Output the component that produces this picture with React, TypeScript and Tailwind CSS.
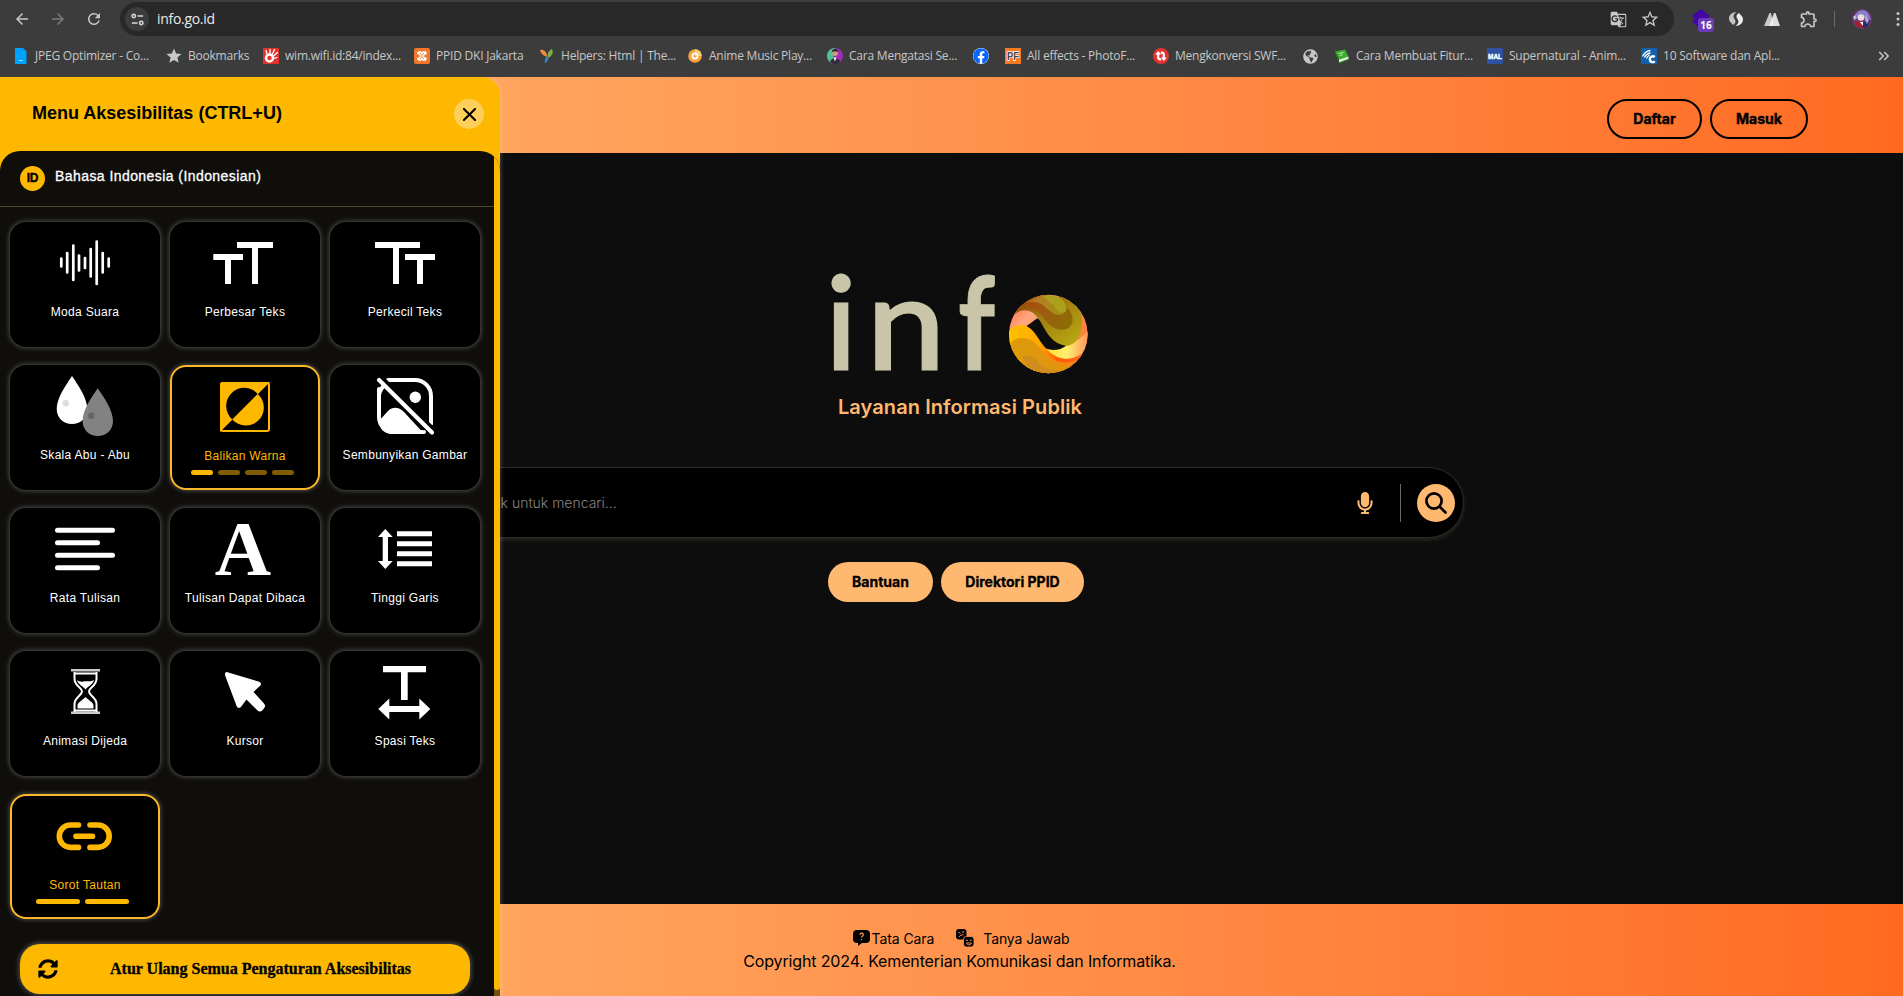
import React from "react";
import {
  MdArrowBack, MdArrowForward, MdRefresh, MdGTranslate, MdStarBorder, MdStar, MdOutlineExtension,
  MdKeyboardDoubleArrowRight,
} from "react-icons/md";
import { FaFacebook, FaSyncAlt, FaGlobeAmericas, FaMicrophone } from "react-icons/fa";

type Bookmark = { icon: React.ReactNode; label?: string; width: string };

const bookmarks: Bookmark[] = [
  {
    width: "w-[153px]", label: "JPEG Optimizer - Co...",
    icon: <svg viewBox="0 0 16 16" className="size-4"><path d="M2 0h8l3.500 3.500V15a1 1 0 0 1-1 1h-9.500a1 1 0 0 1-1-1z" fill="#00a2ff" /><path d="M6 12.500h4" stroke="#9fdcff" /></svg>,
  },
  { width: "w-[97px]", label: "Bookmarks", icon: <MdStar className="size-[18px] -mx-px text-[#c7c7c7]" /> },
  {
    width: "w-[151px]", label: "wim.wifi.id:84/index...",
    icon: <svg viewBox="0 0 16 16" className="size-4"><path d="M0 0h16v16H0z" fill="#e2322d" /><circle cx="6.500" cy="10" r="3.500" fill="none" stroke="#fff" strokeWidth="2.400" /><path d="M4 6 3 2.500M7 5.500V1.500M9.500 6l2-4.500M10.500 8l4-3.500M10.500 10.500l3.500-1" stroke="#fff" strokeWidth="1.300" strokeLinecap="round" /></svg>,
  },
  {
    width: "w-[125px]", label: "PPID DKI Jakarta",
    icon: <svg viewBox="0 0 16 16" className="size-4"><rect width="16" height="16" rx="2" fill="#f0762c" /><path d="M4 4l3 4-3 4M12 4L9 8l3 4M4 4h3l1 2 1-2h3M4 12h3l1-2 1 2h3M4 4v2.500M12 4v2.500M4 12V9.500M12 12V9.500" fill="none" stroke="#fff" strokeWidth="1.400" strokeLinejoin="round" /></svg>,
  },
  {
    width: "w-[148px]", label: "Helpers: Html | The...",
    icon: <svg viewBox="0 0 16 16" className="size-4"><path d="M1 2c4-1 7 2 7 7C5 8 2 6 1 2z" fill="#f08a3c" /><path d="M13 1c2 3 0 7-4 9-1-4 0-7 4-9z" fill="#7db343" /><path d="M8 8c2 2 2 5-2 7-1-2 0-4 2-7z" fill="#2f87d0" /></svg>,
  },
  {
    width: "w-[140px]", label: "Anime Music Play...",
    icon: <svg viewBox="0 0 16 16" className="size-4"><circle cx="8" cy="8" r="6.800" fill="#f5a33a" /><path d="M8 1.200a6.800 6.800 0 0 1 6.800 6.800H8z" fill="#f7d27a" /><circle cx="8" cy="8" r="2.600" fill="none" stroke="#fff" strokeWidth="1.800" /></svg>,
  },
  {
    width: "w-[146px]", label: "Cara Mengatasi Se...",
    icon: <svg viewBox="0 0 16 16" className="size-4"><circle cx="8" cy="8" r="8" fill="#a02cb4" /><path d="M8 0a8 8 0 0 0-3 15.400z" fill="#4fc08f" /><circle cx="8" cy="5" r="3" fill="#c69a7e" /><path d="M5 4c0-4 6-4 6 0-2-1-4-1-6 0z" fill="#222" /><path d="M3 14c1-5 9-5 10 0a8 8 0 0 1-10 0z" fill="#2a2d3a" /><path d="m6.500 9.500 1.500 4 1.500-4z" fill="#fff" /></svg>,
  },
  { width: "w-[32px]", icon: <FaFacebook className="size-4 rounded-full bg-white text-[#0866ff]" /> },
  {
    width: "w-[148px]", label: "All effects - PhotoF...",
    icon: <svg viewBox="0 0 16 16" className="size-4"><path d="M0 0h16v16H0z" fill="#f47a1f" /><text x="2" y="12" fontSize="10.500" fontWeight="900" fontFamily="Liberation Sans, sans-serif" fill="#444" stroke="#fff" strokeWidth="1.600" paintOrder="stroke" textLength="12" lengthAdjust="spacingAndGlyphs">PF</text></svg>,
  },
  {
    width: "w-[150px]", label: "Mengkonversi SWF...",
    icon: <svg viewBox="0 0 16 16" className="size-4"><circle cx="8" cy="8" r="8" fill="#e5322e" /><path d="M5.200 5v4.300a2 2 0 0 0 2 2h1M10.800 11V6.700a2 2 0 0 0-2-2h-1" fill="none" stroke="#fff" strokeWidth="2.200" /><path d="M2.200 6.500l3-3.500 3 3.500zM7.800 9.500l3 3.500 3-3.500z" fill="#fff" /></svg>,
  },
  { width: "w-[31px]", icon: <FaGlobeAmericas className="size-[15px] text-[#c7c7c7]" /> },
  {
    width: "w-[153px]", label: "Cara Membuat Fitur...",
    icon: <svg viewBox="0 0 16 16" className="size-4"><path d="m1 3.500 10-2 3.500 7-9.500 3z" fill="#3fae2e" /><path d="m1 3.500 4 8v3L1 6z" fill="#1f6d18" /><path d="m5 11.500 9.500-3V11L5 14.500z" fill="#d9f0d4" /><path d="M5 14.500 14.500 11v1L5 15.500z" fill="#2b8a20" /><path d="m4.500 5.500 5-1M5.500 7.500l3-.7" stroke="#b9f0a8" /></svg>,
  },
  {
    width: "w-[154px]", label: "Supernatural - Anim...",
    icon: <svg viewBox="0 0 16 16" className="size-4"><rect width="16" height="16" rx="1" fill="#2e51a2" /><text x="1" y="11" fontSize="7.500" fontWeight="900" fontFamily="Liberation Sans, sans-serif" fill="#fff" stroke="#fff" strokeWidth=".4" textLength="14" lengthAdjust="spacingAndGlyphs">MAL</text></svg>,
  },
  {
    width: "w-[150px]", label: "10 Software dan Apl...",
    icon: <svg viewBox="0 0 16 16" className="size-4"><path d="M0 0h16v16H0z" fill="#1260aa" /><path d="M13.800 9c-2-1.500-5-.5-5 2.200s3 3.800 5 2.200" fill="none" stroke="#fff" strokeWidth="2.400" /><path d="M1.500 8.500C3 5 5.500 3 9.500 2.500M3.500 9.500c1-2.500 3-4 6-4.500M5.500 10.500c.5-2 1.500-2.500 3-3.500" fill="none" stroke="#fff" strokeWidth="1.300" /></svg>,
  },
];

function BrowserChrome() {
  return (
    <header className="h-[77px] w-full bg-[#3c3c3c] font-['Open_Sans','Noto_Sans',sans-serif] text-[#c7c7c7]">
      <div className="flex h-[38px] items-center">
        <div className="flex w-[120px] items-center gap-[18px] pl-[13px]">
          <MdArrowBack className="size-[18px]" />
          <MdArrowForward className="size-[18px] text-[#7a7a7a]" />
          <MdRefresh className="size-[18px]" />
        </div>
        <div className="flex h-[34px] w-[1554px] items-center rounded-full bg-[#282828] pr-[14px] pl-[5px]">
          <span className="flex size-6 items-center justify-center rounded-full bg-[#3c3c3c]">
            <svg viewBox="0 0 16 16" className="size-[15px]" fill="none" stroke="#d6d6d6" strokeWidth="1.700">
              <circle cx="4" cy="4.300" r="1.800" /><path d="M8 4.300h6M2 11.700h6" /><circle cx="12" cy="11.700" r="1.800" />
            </svg>
          </span>
          <span className="ml-2 pb-px text-[14px] tracking-[-0.3px] text-[#e8e8e8]">info.go.id</span>
          <MdGTranslate className="ml-auto size-[17px]" />
          <MdStarBorder className="ml-[13px] size-[20px]" />
        </div>
        <div className="flex h-full flex-1 items-center">
          <span className="relative ml-[17px] size-[20px]">
            <svg viewBox="0 0 20 20" className="size-[20px]"><path d="m10 0 9 7-3 3 3 3-9 7-9-7 3-3-3-3z" fill="#4507a3" /></svg>
            <span className="absolute top-[9px] left-[7px] flex h-[14px] w-[16px] items-center justify-center rounded-[3px] bg-[#6b3cb8] text-[10px] leading-none font-bold text-white">16</span>
          </span>
          <svg viewBox="0 0 16 16" className="ml-[17px] size-4 shrink-0">
            <path d="M8.500 1C4 1 1 4 1 7.500c0 3 2 4 4 6.500 2-1 3.500-3 1.500-6S6 3 8.500 1z" fill="#c4c4c4" />
            <path d="M7.500 15C12 15 15 12 15 8.500c0-3-2-4-4-6.500-2 1-3.500 3-1.500 6s.5 5-2 7z" fill="#ececec" />
          </svg>
          <svg viewBox="0 0 18 16" className="ml-[19px] h-4 w-[18px] shrink-0">
            <path d="M6.500 2h1.500l3 13H1z" fill="#c9c9c9" /><path d="M11 2h1.500L17 15H6z" fill="#f1f1f1" opacity=".9" />
          </svg>
          <MdOutlineExtension className="ml-[18px] size-[20px] shrink-0" />
          <span className="ml-[15px] h-[16px] w-px bg-[#6a6a6a]" />
          <svg viewBox="0 0 20 20" className="ml-[17px] size-5 shrink-0">
            <circle cx="10" cy="10" r="10" fill="#6b3a6e" /><path d="M3 7c2-7 12-8 14-1l2 5-4-2-8-1-5 4z" fill="#8583c9" /><circle cx="9" cy="8.500" r="3.300" fill="#f3d9dc" /><path d="M2 12l6 1 3 5-5 1z" fill="#a81d2e" /><path d="M11 13l7-2-3 7-4 1z" fill="#272a5c" /><path d="M13 6l4 5-2 4-2-4z" fill="#a9a6e6" /><path d="M8 13l3 0 0 4z" fill="#fff" /><path d="M1 8l3-2-1 5z" fill="#d9d4ef" />
          </svg>
          <svg viewBox="0 0 4 16" className="ml-[24px] h-4 w-1 shrink-0" fill="#c7c7c7">
            <circle cx="2" cy="2.500" r="1.500" /><circle cx="2" cy="8" r="1.500" /><circle cx="2" cy="13.500" r="1.500" />
          </svg>
        </div>
      </div>
      <nav className="flex h-[36px] items-center pl-[13px] text-[12px]">
        {bookmarks.map((b, i) => (
          <span key={i} className={`flex shrink-0 items-center gap-[6px] whitespace-nowrap ${b.width}`}>
            <span className="shrink-0">{b.icon}</span>
            {b.label && <span className="-mt-px tracking-[-0.22px]">{b.label}</span>}
          </span>
        ))}
        <MdKeyboardDoubleArrowRight className="ml-auto mr-[10px] size-[18px]" />
      </nav>
    </header>
  );
}

type Tool = { label: string; art: React.ReactNode; steps?: boolean[]; stepWidth?: string };

const tools: Tool[] = [
  {
    label: "Moda Suara",
    art: (
      <path
        d="M51.300 36.500v8M57.200 31v19.500M63.300 23.500v34.500M69 33.500v15M75 36v10M80.700 27v27.500M86.700 19.500v42.500M92.700 31v19.500M98.700 36.500v8"
        stroke="currentColor" strokeWidth="2.700" strokeLinecap="round"
      />
    ),
  },
  { label: "Perbesar Teks", art: <path fill="currentColor" d="M67 20h36v6H88v36h-6V26H67zM43.300 32h29.700v6H61v24h-6V38H43.300z" /> },
  { label: "Perkecil Teks", art: <path fill="currentColor" d="M45 20h45v6H69v36h-6V26H45zM75 32h30v6H93v24h-6V38H75z" /> },
  {
    label: "Skala Abu - Abu",
    art: (
      <>
        <path d="M62 11C56 20 46.700 33 46.700 44c0 9 7 15 15.300 15s15.300-6 15.300-15C77.300 33 68 20 62 11z" fill="#fff" />
        <circle cx="55.700" cy="38.300" r="3.200" fill="#ddd" />
        <path d="M87.700 23.300C81.700 32 72.600 45 72.600 56c0 9 7 15 15.200 15s15.200-6 15.200-15c0-11-9.300-24-15.300-32.700z" fill="#828282" />
        <circle cx="81.300" cy="50.700" r="3.200" fill="#666" />
      </>
    ),
  },
  {
    label: "Balikan Warna", steps: [true, false, false, false], stepWidth: "w-[22px]",
    art: (
      <>
        <rect x="51" y="18" width="48" height="48" rx="2" fill="none" stroke="currentColor" strokeWidth="2" />
        <path d="M50 67V20a3 3 0 0 1 3-3h47z" fill="currentColor" />
        <path d="M62.300 54.400A18 18 0 1 1 87.700 29z" fill="#000" />
        <path d="M87.700 29A18 18 0 1 1 62.300 54.400z" fill="currentColor" />
      </>
    ),
  },
  {
    label: "Sembunyikan Gambar",
    art: (
      <>
        <path d="M58 15h27a16 16 0 0 1 16 16v28M49 24v28a15 15 0 0 0 15 15h30" fill="none" stroke="currentColor" strokeWidth="4" strokeLinecap="round" />
        <path d="M49 56l9-10c5-5 11-4 16 1l18 19.500c-2 2-5 2.500-8 2.500H62c-8 0-13-6-13-13z" fill="currentColor" />
        <path d="M49 30c1-5 3-8 6-10" fill="none" stroke="currentColor" strokeWidth="4" />
        <circle cx="85.300" cy="32.300" r="5.700" fill="currentColor" />
        <path d="M51 11l54 54" stroke="#000" strokeWidth="3" />
        <path d="M49 15l53 52.500" stroke="currentColor" strokeWidth="4.200" strokeLinecap="round" />
        <path d="M67 38l27 27" stroke="#000" strokeWidth="1.600" />
      </>
    ),
  },
  {
    label: "Rata Tulisan",
    art: <path d="M47.500 22.300h55M47.500 34.700h40M47.500 47.300h55M47.500 59.700h40" stroke="currentColor" strokeWidth="5" strokeLinecap="round" />,
  },
  {
    label: "Tulisan Dapat Dibaca",
    art: <text x="73" y="67.300" textAnchor="middle" fontSize="78" fontWeight="700" fontFamily="Liberation Serif, serif" fill="currentColor">A</text>,
  },
  {
    label: "Tinggi Garis",
    art: (
      <>
        <path d="M55.300 21l7.400 8H58v24h4.700l-7.400 8-7.300-8h4.700V29H48z" fill="currentColor" />
        <path d="M67 25.700h35M67 35.700h35M67 45.700h35M67 55.700h35" stroke="currentColor" strokeWidth="5" />
      </>
    ),
  },
  {
    label: "Animasi Dijeda",
    art: (
      <>
        <path d="M61 19.200h29M61 61.800h29" stroke="#ccc" strokeWidth="2.400" />
        <path d="M64.500 21v7c0 7 7.500 8.500 7.500 12.500S64.500 46 64.500 53v8M86.500 21v7c0 7-7.500 8.500-7.500 12.500s7.500 5.500 7.500 12.500v8M64 22.500h23M64 59.500h23" fill="none" stroke="currentColor" strokeWidth="2" />
        <path d="M67 29c2 1.500 4 2 6 1.500 4-.5 8 .5 11-1.500-1 4.500-6 6-8.500 9.500C73 35 68 33.500 67 29z" fill="currentColor" />
        <path d="M67.500 57.500v-3c0-3 4-4.500 8-8.500 4 4 8 5.500 8 8.500v3z" fill="currentColor" />
      </>
    ),
  },
  {
    label: "Kursor",
    art: (
      <path
        d="M57.500 21.200l31 9.300c3 1 3.200 3.500.8 5L83.500 41l10.500 11.500c1.600 1.800 1.300 3.500-.2 5l-1.300 1.700c-1.700 1.600-3.600 1.700-5.200 0L76.500 48.500l-5 6.800c-1.600 2.400-4 2-5-.6L55.300 25c-.7-2.600.2-4.300 2.200-3.800z"
        fill="currentColor"
      />
    ),
  },
  {
    label: "Spasi Teks",
    art: <path fill="currentColor" d="M53 15h43v6.300H77.700V49H71V21.300H53zM48.300 58l11-10.500v7.600h30v-7.600l11 10.500-11 10.500v-7.600h-30v7.600z" />,
  },
  {
    label: "Sorot Tautan", steps: [true, true], stepWidth: "w-[44px]",
    art: (
      <path
        d="M68.500 31H60.500a11.200 11.200 0 0 0 0 22.400h8M80 31h8a11.200 11.200 0 0 1 0 22.400h-8M66 42.300h16.500"
        fill="none" stroke="currentColor" strokeWidth="5.600" strokeLinecap="round"
      />
    ),
  },
];

function ToolCard({ tool }: { tool: Tool }) {
  const active = Boolean(tool.steps);
  return (
    <button
      className={
        active
          ? "flex h-[125px] w-[150px] flex-col items-center rounded-[16px] bg-black text-[#ffb800] shadow-[inset_0_0_0_2px_#fdb827,0_0_5px_rgba(255,255,255,0.35)]"
          : "flex h-[125px] w-[150px] flex-col items-center rounded-[16px] bg-black text-white shadow-[0_0_0_1px_#333,0_0_5px_1px_rgba(255,255,255,0.25)]"
      }
    >
      <svg viewBox="0 0 150 82" className="h-[82px] w-[150px] shrink-0 overflow-visible">{tool.art}</svg>
      <span className={`text-[12px] leading-4 tracking-[0.3px] whitespace-nowrap ${active ? "mt-px" : ""}`}>{tool.label}</span>
      {tool.steps && (
        <span className="mt-[6px] mr-[5px] flex gap-[5px]">
          {tool.steps.map((on, i) => (
            <span key={i} className={`h-[5px] rounded-full ${tool.stepWidth} ${on ? "bg-[#ffb800]" : "bg-[#805c00]"}`} />
          ))}
        </span>
      )}
    </button>
  );
}

function AccessibilityPanel() {
  return (
    <aside className="absolute inset-y-0 left-0 z-10 flex w-[500px] flex-col rounded-tr-[18px] bg-[#ffb800] font-['Liberation_Sans',Arial,sans-serif] shadow-[0_0_5px_rgba(255,255,255,0.35)]">
      <div className="flex h-[74px] shrink-0 items-start justify-between pr-4 pl-[32px]">
        <h2 className="mt-[22px] text-[18px] leading-7 font-bold text-black">Menu Aksesibilitas (CTRL+U)</h2>
        <span className="mt-[22px] flex size-[30px] items-center justify-center rounded-full bg-[#ffcf5c]">
          <svg viewBox="0 0 14 14" className="size-[13px]"><path d="M1 1l12 12M13 1L1 13" stroke="#000" strokeWidth="2.200" strokeLinecap="round" /></svg>
        </span>
      </div>
      <div className="flex flex-1 overflow-hidden rounded-t-[20px] bg-[#100e0b]">
        <div className="w-[494px]">
          <div className="flex h-[56px] items-center border-b border-[#4f452c] pb-px pl-5">
            <span className="mt-px flex size-[25px] items-center justify-center rounded-full bg-[#ffb800] pb-px text-[12px] font-bold tracking-[-0.2px] text-black [-webkit-text-stroke:0.4px_#000]">ID</span>
            <span className="ml-[10px] -mt-[4px] text-[14px] tracking-[0.43px] text-white [-webkit-text-stroke:0.3px_#fff]">Bahasa Indonesia (Indonesian)</span>
          </div>
          <div className="grid grid-cols-[repeat(3,150px)] gap-x-[10px] gap-y-[18px] pt-[15px] pl-[10px]">
            {tools.map((t) => <ToolCard key={t.label} tool={t} />)}
          </div>
          <button className="mt-[25px] ml-5 flex h-[50px] w-[450px] items-center rounded-[20px] bg-[#ffb800] pl-[18px] text-black shadow-[0_0_5px_1px_rgba(255,255,255,0.3)]">
            <FaSyncAlt className="size-[20px]" />
            <span className="ml-[52px] font-['Liberation_Serif',serif] text-[16px] font-bold whitespace-nowrap [-webkit-text-stroke:0.3px_#000]">Atur Ulang Semua Pengaturan Aksesibilitas</span>
          </button>
        </div>
        <div className="flex w-[6px] flex-col bg-[#6e5310]">
          <div className="h-[839px] rounded-b-[3px] bg-[#ffb800]" />
        </div>
      </div>
    </aside>
  );
}

function InfoLogo() {
  return (
    <svg viewBox="0 -35 270 170" className="h-[170px] w-[270px]" role="img" aria-label="info">
      <defs>
        <clipPath id="orb"><circle cx="145" cy="147" r="118" /></clipPath>
        <linearGradient id="salmon" x1="0" y1="0" x2="1" y2="1"><stop offset="0" stopColor="#ff4a20" /><stop offset=".28" stopColor="#ffa880" /><stop offset=".45" stopColor="#ff8a50" /><stop offset="1" stopColor="#ff7436" /></linearGradient>
        <linearGradient id="brown" x1="0" y1="0" x2="1" y2=".5"><stop offset="0" stopColor="#b23c08" /><stop offset=".5" stopColor="#a3560f" /><stop offset="1" stopColor="#8f6a08" /></linearGradient>
        <linearGradient id="olive" x1="0" y1="0" x2="1" y2="1"><stop offset="0" stopColor="#8c3604" /><stop offset=".45" stopColor="#a08010" /><stop offset="1" stopColor="#bcae10" /></linearGradient>
        <linearGradient id="cap" x1="0" y1="0" x2="1" y2="0"><stop offset="0" stopColor="#c06a28" /><stop offset=".5" stopColor="#b08420" /><stop offset="1" stopColor="#a09010" /></linearGradient>
        <linearGradient id="flame" x1="0" y1="0" x2="1" y2="0"><stop offset="0" stopColor="#ffc400" /><stop offset=".4" stopColor="#ffa800" /><stop offset=".62" stopColor="#ff5c08" /><stop offset="1" stopColor="#ff7020" /></linearGradient>
        <linearGradient id="pale" x1="0" y1="0" x2="1" y2="0"><stop offset="0" stopColor="#ffe030" /><stop offset=".5" stopColor="#fff070" /><stop offset="1" stopColor="#ff9458" /></linearGradient>
        <linearGradient id="gold" x1="0" y1="0" x2="1" y2="0"><stop offset="0" stopColor="#e09c08" /><stop offset="1" stopColor="#f88418" /></linearGradient>
      </defs>
      <g fill="#c9c5a8" stroke="#c9c5a8" strokeWidth="3" fontFamily="Lato, sans-serif" fontWeight="400" fontSize="128">
        <text x="16" y="103.500" textAnchor="middle">i</text>
        <text x="42" y="103.500" textLength="78" lengthAdjust="spacingAndGlyphs">n</text>
        <text x="133" y="104.500" fontWeight="700" strokeWidth="1" textLength="37" lengthAdjust="spacingAndGlyphs">f</text>
      </g>
      <g transform="translate(175 20) scale(0.3333)" clipPath="url(#orb)">
        <path d="M20 20h250v250H20z" fill="url(#salmon)" />
        <path d="M135 188c40 10 85-5 130-50v60c-20 25-60 35-90 22-18-8-30-18-40-32z" fill="url(#pale)" />
        <path d="M80 123l32-23c20 10 40 60 86 82-16 14-42 16-62 8-20-12-36-50-56-67z" fill="#0d0d0d" />
        <path d="M40 92c25-25 55-20 75 8 22 34 36 76 82 82 32 0 50-34 50-72 0-36-20-58-56-73L80 30z" fill="url(#olive)" />
        <path d="M36 84c34-30 68-22 90 8 18 26 34 42 60 42 26 0 36-20 30-42-8-28-40-50-80-62z" fill="url(#brown)" />
        <path d="M76 54c26-8 44-2 62 14 20 18 36 26 52 18 18-12-10-50-60-58z" fill="url(#cap)" />
        <path d="M130 34c12 14 26 20 36 34 8 12 20 18 30 12 10-8 0-28-14-40-16-10-36-12-52-6z" fill="#aaa01c" />
        <path d="M20 150c14-34 56-42 82-8 20 26 36 60 70 74 36 14 70 0 94-30v90H20z" fill="url(#flame)" />
        <path d="M20 200c12-50 60-52 88-24 22 24 40 50 78 56 26 3 46-4 64-20v62H40z" fill="url(#gold)" />
        <path d="M40 186c18-34 56-22 76 4 18 24 34 48 64 52 24 2 40 0 50-6l-40 40H90z" fill="#dc980c" opacity=".8" />
        <path d="M68 217c20-14 36 0 50 18 14 16 40 26 80 20l-40 20H100z" fill="#cc8a20" opacity=".8" />
      </g>
    </svg>
  );
}

function PublicSite() {
  return (
    <div className="flex h-full flex-col font-[Inter,sans-serif]">
      <div className="flex h-[76px] shrink-0 items-center justify-end gap-2 bg-linear-to-r from-[#ffb870] to-[#ff6a20] pt-[8px] pr-[95px]">
        <button className="h-10 w-[95px] rounded-[20px] border-2 border-black pb-[2px] text-[14px] font-bold text-black [-webkit-text-stroke:0.4px_#000]">Daftar</button>
        <button className="h-10 w-[98px] rounded-[20px] border-2 border-black pb-[2px] text-[14px] font-bold text-black [-webkit-text-stroke:0.4px_#000]">Masuk</button>
      </div>
      <main className="flex flex-1 flex-col items-center bg-[#0d0d0d] pt-[77px]">
        <div className="ml-[17px] flex h-[170px]"><InfoLogo /></div>
        <p className="-mt-[7px] ml-[17px] text-[20px] leading-7 font-semibold tracking-[0.08px] text-[#ffb870]">Layanan Informasi Publik</p>
        <div className="mt-[46px] flex h-[71px] w-[1024px] items-center rounded-full border border-[#2e2a20] bg-black pr-[8px] pl-[36px] shadow-[0_2px_4px_rgba(255,240,200,0.12)]">
          <span className="text-[14px] font-light text-[#858585]">Ketik untuk mencari...</span>
          <FaMicrophone className="mr-[24px] ml-auto size-[22px] text-[#ffb870]" />
          <span className="h-[38px] w-px bg-[#6b6b6b]" />
          <span className="ml-[16px] flex size-[38px] items-center justify-center rounded-full bg-[#ffb870]">
            <svg viewBox="0 0 22 22" className="size-[22px]" fill="none" stroke="#000" strokeWidth="2.700" strokeLinecap="round">
              <circle cx="9" cy="9" r="7.600" /><path d="M14.800 14.800l5.700 5.700" />
            </svg>
          </span>
        </div>
        <div className="mt-[24px] ml-[9px] flex gap-2">
          <button className="h-10 w-[105px] rounded-[20px] bg-[#ffb870] pb-[2px] text-[14px] font-bold text-black [-webkit-text-stroke:0.3px_#000]">Bantuan</button>
          <button className="h-10 w-[143px] rounded-[20px] bg-[#ffb870] pb-[2px] text-[14px] font-bold text-black [-webkit-text-stroke:0.3px_#000]">Direktori PPID</button>
        </div>
      </main>
      <footer className="flex h-[92px] shrink-0 flex-col items-center bg-linear-to-r from-[#ffb870] to-[#ff6a20] pt-[23px] pl-4 text-black">
        <div className="ml-[3px] flex h-[22px] items-center text-[14px]">
          <svg viewBox="0 0 17 16" className="mr-[2px] h-4 w-[17px]">
            <path d="M4 0h9a4 4 0 0 1 4 4v5a4 4 0 0 1-4 4H9l-4 3v-3H4a4 4 0 0 1-4-4V4a4 4 0 0 1 4-4z" fill="#000" />
            <path d="M7 4.700c.2-2 3.300-2 3.300 0 0 1.300-1.700 1.300-1.700 2.800M8.600 9v1.200" fill="none" stroke="#ff9a52" strokeWidth="1.200" />
          </svg>
          <span className="tracking-[-0.1px]">Tata Cara</span>
          <svg viewBox="0 0 18 18" className="mr-[9px] ml-[22px] size-[18px]">
            <rect x="0" y="0" width="10.500" height="10.500" rx="3" fill="#000" />
            <rect x="7.500" y="7.500" width="10.500" height="10.500" rx="3" fill="#000" stroke="#ff9450" strokeWidth=".8" />
            <path d="M2.500 3.500l2 .7M8 2.500l-2 1M3 8c1-2 3-2.500 4.500-2M10 11l2 .5M15.800 11l-2 .5M10.500 14h5c-.5 2.500-4.500 2.500-5 0z" fill="none" stroke="#ff9450" strokeWidth="1" />
          </svg>
          <span className="tracking-[-0.1px]">Tanya Jawab</span>
        </div>
        <p className="text-[16px] leading-6 tracking-[-0.14px]">Copyright 2024. Kementerian Komunikasi dan Informatika.</p>
      </footer>
    </div>
  );
}

export default function App() {
  return (
    <div className="flex h-[996px] w-[1903px] flex-col overflow-hidden bg-[#0d0d0d]">
      <BrowserChrome />
      <div className="relative flex-1 overflow-hidden">
        <PublicSite />
        <AccessibilityPanel />
      </div>
    </div>
  );
}
